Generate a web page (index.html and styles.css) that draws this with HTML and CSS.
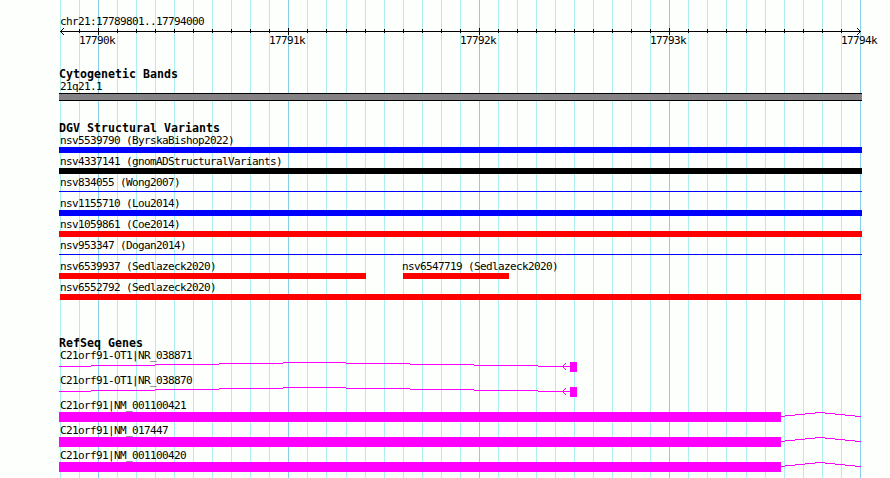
FILE: index.html
```html
<!DOCTYPE html>
<html lang="en">
<head>
  <meta charset="UTF-8" />
  <title>chr21:17789801..17794000</title>
  <meta name="viewport" content="width=device-width, initial-scale=1" />
  <link rel="stylesheet" href="styles.css">
</head>
<body>

<div class="browser">
  <svg class="grid" width="890" height="478">
    <path id="grid-minor" class="minor" />
    <path id="grid-major" class="major" />
  </svg>

  <div class="track ruler">
    <div class="label">chr21:17789801..17794000</div>
    <svg id="ruler" class="scale" width="803" height="20">
      <path class="axis" d="M1 3.5H802M1.5 3v1M2.5 2v1M3.5 1v1M4.5 0v1M2.5 4v1M3.5 5v1M4.5 6v1M800.5 2v1M799.5 1v1M798.5 0v1M800.5 4v1M799.5 5v1M798.5 6v1" />
      <path id="ticks" class="axis" />
    </svg>
  </div>

  <div class="track bands">
    <h2>Cytogenetic Bands</h2>
    <div class="label">21q21.1</div>
    <div class="band"></div>
  </div>

  <div class="track variants">
    <h2>DGV Structural Variants</h2>
    <div class="row"><div class="feature full"><div class="label">nsv5539790 (ByrskaBishop2022)</div><div class="bar blue"></div></div></div>
    <div class="row"><div class="feature full"><div class="label">nsv4337141 (gnomADStructuralVariants)</div><div class="bar black"></div></div></div>
    <div class="row"><div class="feature full"><div class="label">nsv834055 (Wong2007)</div><div class="bar thin"></div></div></div>
    <div class="row"><div class="feature full"><div class="label">nsv1155710 (Lou2014)</div><div class="bar blue"></div></div></div>
    <div class="row"><div class="feature full"><div class="label">nsv1059861 (Coe2014)</div><div class="bar red"></div></div></div>
    <div class="row"><div class="feature full"><div class="label">nsv953347 (Dogan2014)</div><div class="bar thin"></div></div></div>
    <div class="row">
      <div class="feature first"><div class="label">nsv6539937 (Sedlazeck2020)</div><div class="bar red"></div></div>
      <div class="feature second"><div class="label">nsv6547719 (Sedlazeck2020)</div><div class="bar red"></div></div>
    </div>
    <div class="row"><div class="feature full"><div class="label">nsv6552792 (Sedlazeck2020)</div><div class="bar red inset"></div></div></div>
  </div>

  <div class="track genes">
    <h2>RefSeq Genes</h2>
    <div class="gene"><div class="label">C21orf91-OT1|NR_038871</div><svg width="803" height="10"><use href="#ot1" /></svg></div>
    <div class="gene"><div class="label">C21orf91-OT1|NR_038870</div><svg width="803" height="10"><use href="#ot1" /></svg></div>
    <div class="gene"><div class="label">C21orf91|NM_001100421</div><svg width="803" height="10"><use href="#c21orf91" /></svg></div>
    <div class="gene"><div class="label">C21orf91|NM_017447</div><svg width="803" height="10"><use href="#c21orf91" /></svg></div>
    <div class="gene"><div class="label">C21orf91|NM_001100420</div><svg width="803" height="10"><use href="#c21orf91" /></svg></div>
  </div>
</div>

<!-- gene shapes: exon boxes joined by intron lines -->
<svg class="defs" width="0" height="0">
  <defs>
    <g id="ot1">
      <path class="intron" d="M0 4.5H32M32 3.5H96M96 2.5H160M160 1.5H224M224 .5H287M287 1.5H351M351 2.5H415M415 3.5H479M479 4.5H511" />
      <path class="intron" d="M503 4.5h1M504 3.5h1M505 2.5h1M506 1.5h1M504 5.5h1M505 6.5h1M506 7.5h1" />
      <rect class="exon" x="511" y="0" width="7" height="10" />
    </g>
    <g id="c21orf91">
      <rect class="exon" x="0" y="0" width="722" height="10" />
      <path class="intron" d="M722 4.5H726M726 3.5H736M736 2.5H746M746 1.5H756M756 .5H766M766 1.5H776M776 2.5H786M786 3.5H796M796 4.5H802" />
    </g>
  </defs>
</svg>

<script>
// one line per 100 bp, a major one per 1 kb
let minor = '', major = '', ticks = '';
const ruler = document.getElementById('ruler');

for (let i = 0; i <= 42; i++) {
  const x = Math.floor(60.3 + i * 800 / 42);
  const isMajor = i % 10 === 2;
  if (isMajor) {
    major += `M${x + 0.5} 0V478`;
    const text = document.createElementNS('http://www.w3.org/2000/svg', 'text');
    text.setAttribute('x', x - 59 - 19);
    text.setAttribute('y', 16);
    text.textContent = (17790 + (i - 2) / 10) + 'k';
    ruler.appendChild(text);
  } else {
    minor += `M${x + 0.5} 0V478`;
  }
  if (i > 0 && i < 42) {
    ticks += isMajor ? `M${x - 58.5} 0v7` : `M${x - 58.5} 1v4`;
  }
}

document.getElementById('grid-minor').setAttribute('d', minor);
document.getElementById('grid-major').setAttribute('d', major);
document.getElementById('ticks').setAttribute('d', ticks);
</script>

</body>
</html>
```
FILE: styles.css
```css
body { margin: 0; background: #fdfffc; color: #000; font-family: "DejaVu Sans Mono", monospace; font-size: 11px; letter-spacing: -0.622px; overflow: hidden; }
svg { display: block; overflow: visible; shape-rendering: crispEdges; }
h2 { margin: 0; height: 12px; line-height: 17px; font-size: 11.6px; letter-spacing: 0.017px; white-space: nowrap; }

.browser { position: relative; box-sizing: border-box; width: 890px; height: 478px; padding: 13px 28px 0 59px; }
.grid { position: absolute; top: 0; left: 0; }
.grid path, .axis, .intron { fill: none; stroke-width: 1; }
.minor { stroke: #afeeee; }
.major { stroke: #87ceeb; }
.axis { stroke: #000; }

.track { position: relative; }
.label { height: 15px; line-height: 17px; padding-left: 1px; white-space: nowrap; }
.bands { margin-top: 18px; }
.band { box-sizing: border-box; height: 8px; background: #848284; border: solid #000; border-width: 1px 0; }

.variants { margin-top: 19px; }
.row { display: flex; }
.full { width: 803px; }
.first { width: 307px; margin-right: 36px; }
.second { width: 107px; }
.second .label { padding-left: 0; }
.second .bar { margin-left: 1px; }
.bar { height: 6px; }
.blue { background: #00f; }
.black { background: #000; }
.red { background: #f00; }
.thin { box-sizing: border-box; height: 6px; padding: 2px 0 3px; background: #00f content-box; }
.inset { margin: 0 1px; }

.genes { margin-top: 35px; }
.gene { height: 25px; }
.intron { stroke: #f0f; }
.exon { fill: #f0f; }
.defs { position: absolute; }
```
